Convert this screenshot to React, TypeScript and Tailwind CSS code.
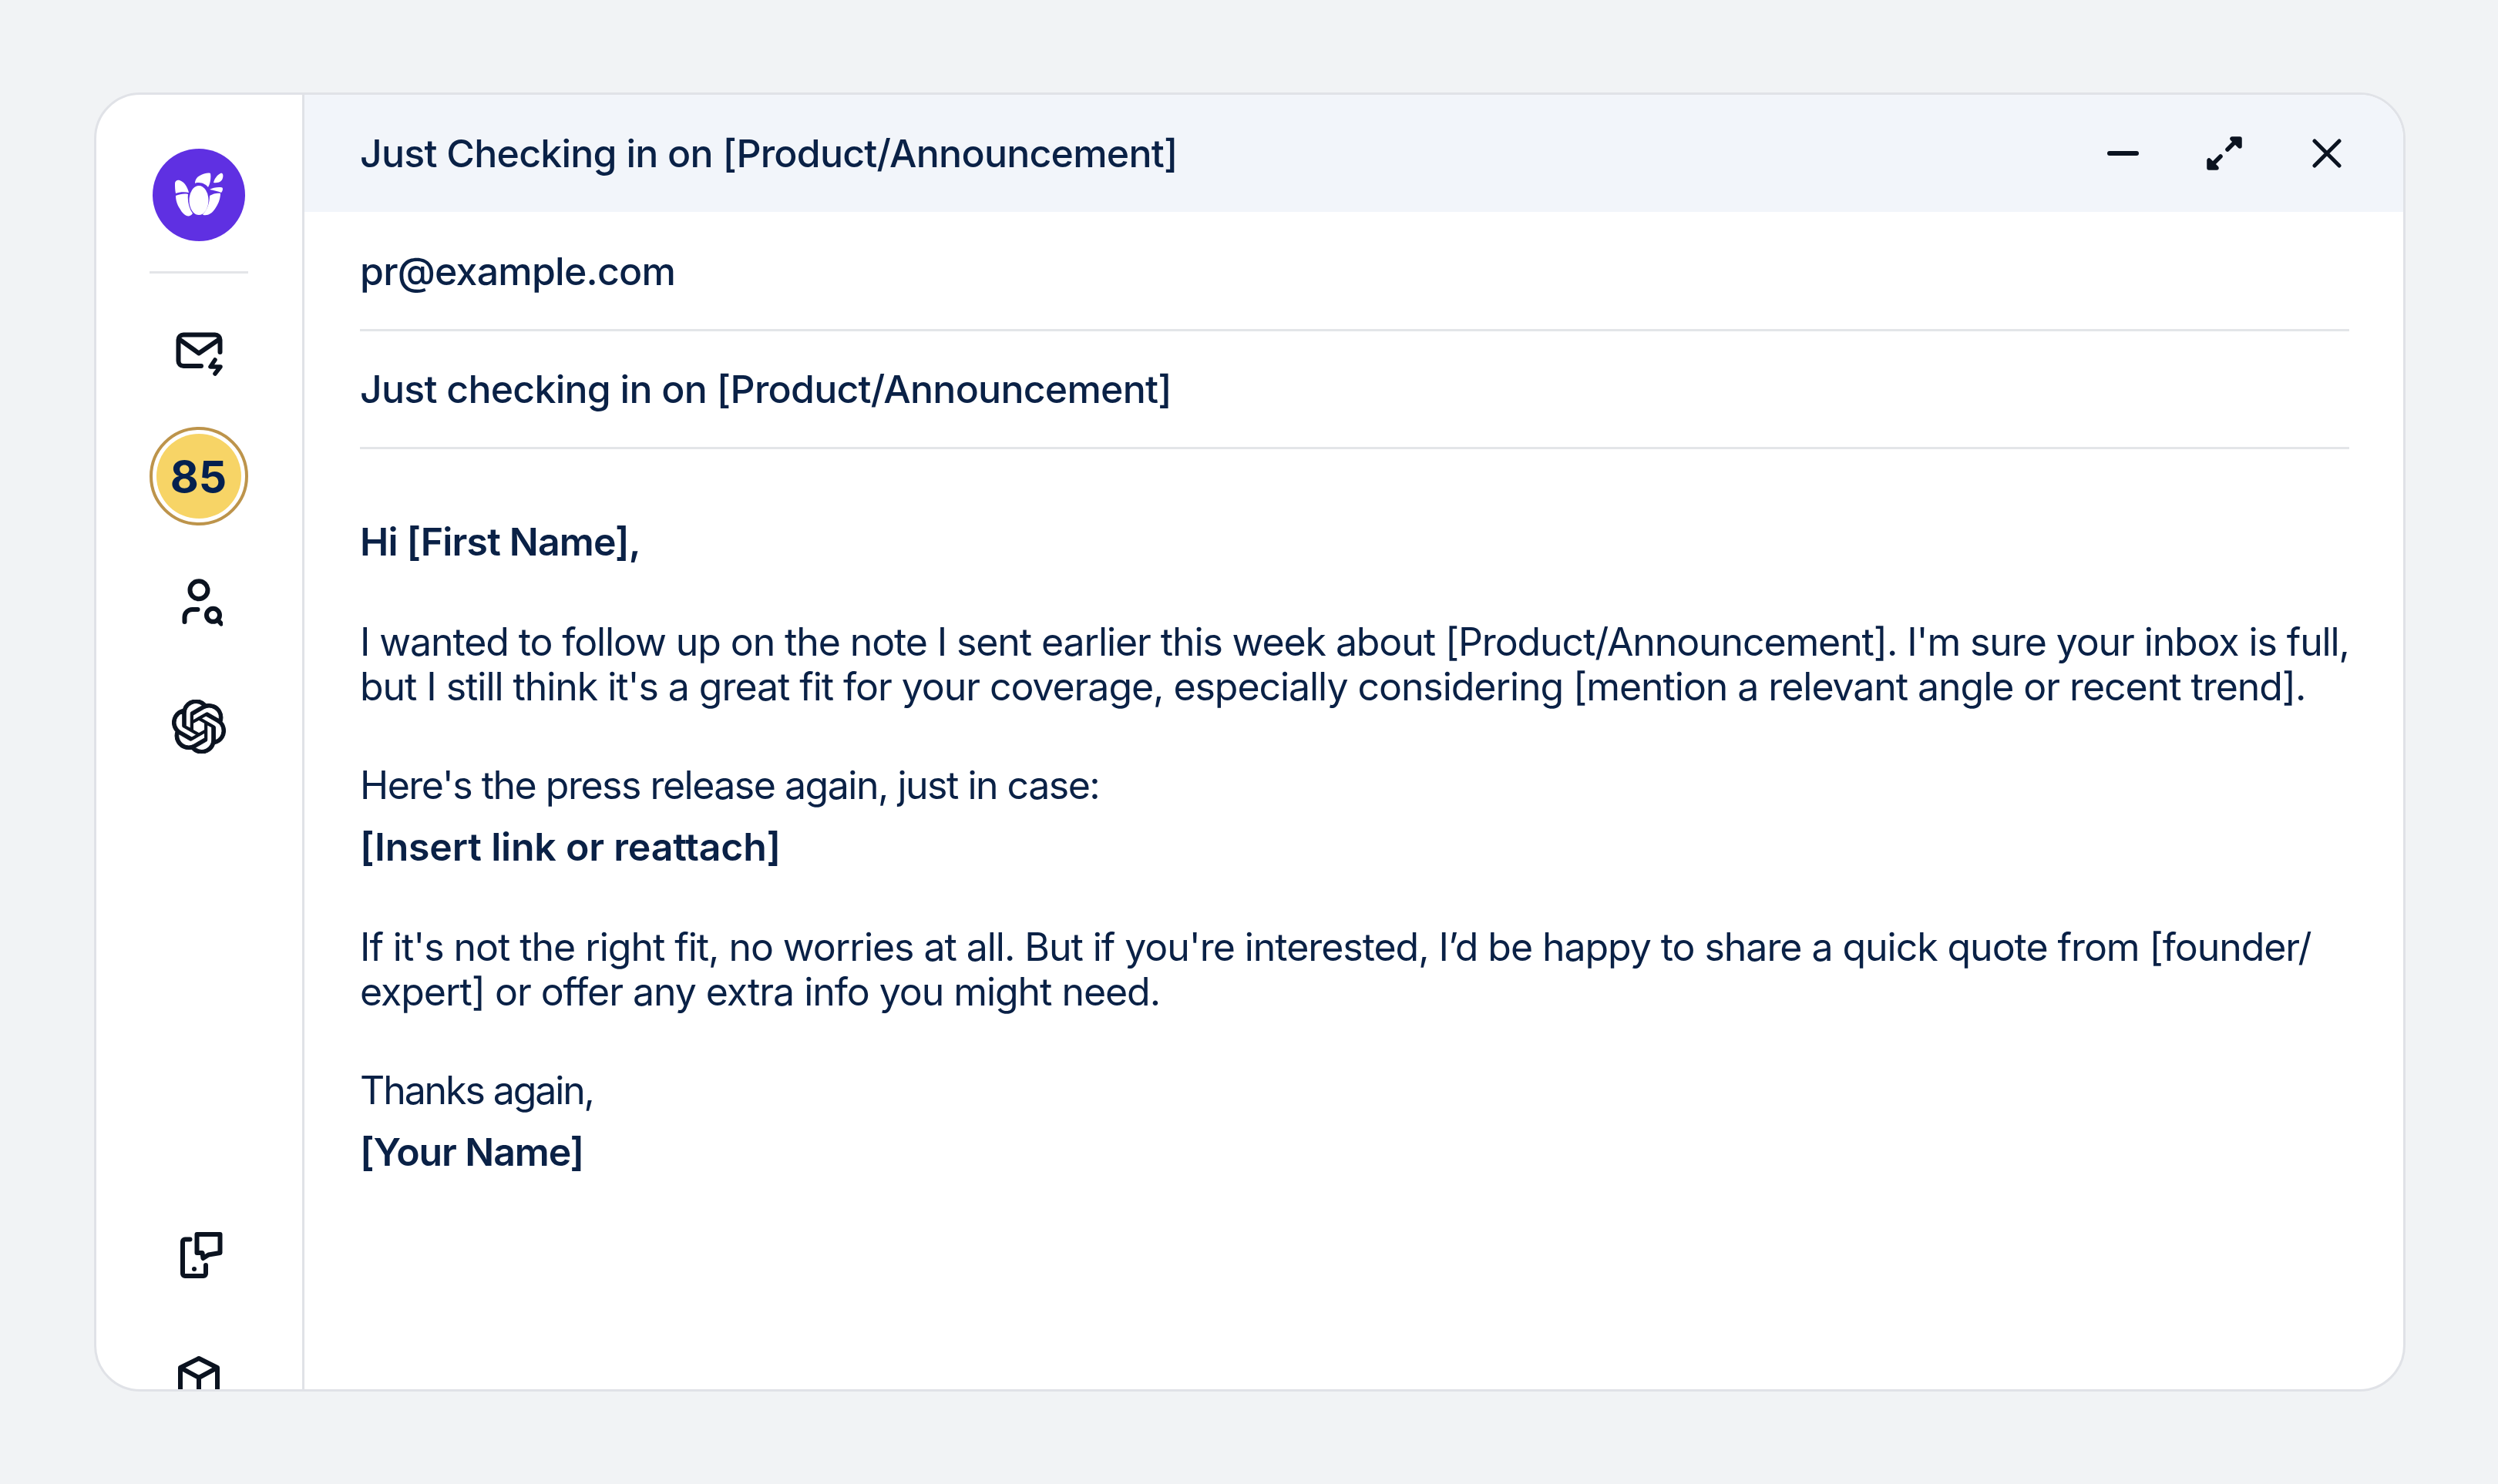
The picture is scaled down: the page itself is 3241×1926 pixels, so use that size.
import { FC, ReactNode } from "react";

const font = "font-['Inter',sans-serif]";

const IconMail = () => (
  <svg width="62" height="58" viewBox="0 0 62 58" fill="none" stroke="#0b1320" strokeWidth="6" strokeLinecap="round" strokeLinejoin="round" className="block">
    <path d="M33 44H10a6.5 6.5 0 0 1-6.5-6.5V10A6.5 6.5 0 0 1 10 3.5h41a6.5 6.5 0 0 1 6.5 6.5v16" />
    <path d="M7 11l23 16.5L54 11" />
    <path d="M51 36l-6 9h13l-7 9" strokeWidth="5.5" />
  </svg>
);

const IconUserSearch = () => (
  <svg width="62" height="62" viewBox="0 0 62 62" fill="none" stroke="#0b1320" strokeWidth="6" strokeLinecap="round" className="block">
    <circle cx="31" cy="14.7" r="11.5" />
    <path d="M12.5 56v-6a10 10 0 0 1 10-10h7" />
    <circle cx="49.5" cy="47.3" r="8.5" />
    <path d="M55.5 53.5l4.5 5" />
  </svg>
);

const IconOpenAI = () => (
  <svg width="70" height="70" viewBox="0 0 24 24" fill="#0b1320" stroke="#0b1320" strokeWidth="0.35" strokeLinejoin="round" className="block">
    <path d="M22.28 9.82a5.98 5.98 0 0 0-.52-4.91 6.05 6.05 0 0 0-6.51-2.9A6.07 6.07 0 0 0 4.98 4.18a5.98 5.98 0 0 0-4 2.9 6.05 6.05 0 0 0 .74 7.1 5.98 5.98 0 0 0 .51 4.91 6.05 6.05 0 0 0 6.52 2.9A5.98 5.98 0 0 0 13.26 24a6.06 6.06 0 0 0 5.77-4.21 5.99 5.99 0 0 0 4-2.9 6.06 6.06 0 0 0-.75-7.07zM13.26 22.43a4.48 4.48 0 0 1-2.88-1.04l.14-.08 4.78-2.76a.79.79 0 0 0 .39-.68v-6.74l2.02 1.17a.07.07 0 0 1 .04.05v5.58a4.5 4.5 0 0 1-4.49 4.5zM3.6 18.3a4.47 4.47 0 0 1-.53-3.01l.14.08 4.78 2.76a.77.77 0 0 0 .78 0l5.84-3.37v2.33a.08.08 0 0 1-.03.06L9.74 19.95a4.5 4.5 0 0 1-6.14-1.65zM2.34 7.9a4.49 4.49 0 0 1 2.37-1.97v5.68a.77.77 0 0 0 .39.68l5.81 3.35-2.02 1.17a.08.08 0 0 1-.07 0l-4.83-2.79A4.5 4.5 0 0 1 2.34 7.87zm16.6 3.86-5.83-3.39 2.02-1.16a.08.08 0 0 1 .07 0l4.83 2.79a4.49 4.49 0 0 1-.68 8.1v-5.68a.79.79 0 0 0-.41-.66zm2.01-3.02-.14-.09-4.77-2.78a.78.78 0 0 0-.79 0L9.41 9.23V6.9a.07.07 0 0 1 .03-.06l4.83-2.79a4.5 4.5 0 0 1 6.68 4.66zM8.31 12.86 6.29 11.7a.08.08 0 0 1-.04-.06V6.07a4.5 4.5 0 0 1 7.38-3.45l-.14.08L8.7 5.46a.8.8 0 0 0-.39.68zm1.1-2.37 2.6-1.5 2.61 1.5v3l-2.6 1.5-2.61-1.5z" />
  </svg>
);

const IconPhoneChat = () => (
  <svg width="56" height="60" viewBox="0 0 56 60" fill="none" stroke="#0b1320" strokeWidth="6" strokeLinecap="round" strokeLinejoin="round" className="block">
    <path d="M12.5 9.5H6a3 3 0 0 0-3 3V54a3 3 0 0 0 3 3h24a3 3 0 0 0 3-3V43" />
    <path d="M21.5 3h30v24l-15 2.5-7 4.5-1-7h-7z" />
    <circle cx="18" cy="48" r="3" fill="#0b1320" stroke="none" />
  </svg>
);

const IconBox = () => (
  <svg width="54" height="60" viewBox="0 0 54 60" fill="none" stroke="#0b1320" strokeWidth="6" strokeLinejoin="round" className="block">
    <path d="M27 4l24 12v32H3V16z" />
    <path d="M3 16l24 13 24-13M27 29v24" />
  </svg>
);

const IconExpand = () => (
  <svg width="48" height="46" viewBox="0 0 48 46" fill="none" stroke="#0b1320" strokeWidth="5.5" strokeLinecap="round" strokeLinejoin="round" className="block">
    <path d="M37 9l-9 9" />
    <path d="M34 4h10v10z" fill="#0b1320" />
    <path d="M19 27l-9 9" />
    <path d="M4 32v10h10z" fill="#0b1320" />
  </svg>
);

const IconClose = () => (
  <svg width="38" height="38" viewBox="0 0 38 38" fill="none" stroke="#0b1320" strokeWidth="5" strokeLinecap="round" className="block">
    <path d="M3 3l32 32M35 3L3 35" />
  </svg>
);

const Logo = () => (
  <div className="flex h-[120px] w-[120px] items-center justify-center rounded-full bg-[#5f30e2]">
    <svg width="64" height="58" viewBox="0 0 64 58" fill="#ffffff">
      <ellipse cx="32" cy="36" rx="12.5" ry="19" />
      <path d="M1 14c0-3 3-5 6-4 6 2 10 8 12 16-5-1-12-1-17 1-1-4-1-9-1-13z" />
      <path d="M2 30c5-2 11-3 16-2-1 9 1 18 6 25-2 3-5 4-8 3-5-2-8-8-11-13-2-4-3-9-3-13z" />
      <path d="M27 14c0-5 3-9 8-11 4-2 9-3 12-2 1 5 0 13-3 18-2-3-7-6-12-6-2 0-3 0-5 1z" />
      <path d="M51 13c1-5 5-10 9-12 3-1 4 2 3 6-1 4-5 7-12 6z" />
      <path d="M46 22c3-2 8-3 12-3 3 0 5 0 5 2 0 2-1 4-2 5-4-2-10-3-15-4z" />
      <path d="M46 30c5-3 10-4 14-3 0 6-2 13-7 20-4 6-9 9-15 8-1 0-1-1 0-2 5-5 8-14 8-23z" />
    </svg>
  </div>
);

const ScoreBadge = () => (
  <div className="flex h-[128px] w-[128px] items-center justify-center rounded-full border-[4px] border-[#bd944b] bg-white">
    <div className="flex h-[110px] w-[110px] items-center justify-center rounded-full bg-[#f7d466] text-[57px] font-bold leading-none text-[#04204f]">
      85
    </div>
  </div>
);

const Para: FC<{ children: ReactNode; className: string }> = ({ children, className }) => (
  <p className={`whitespace-nowrap text-[50px] leading-[58px] ${className}`}>{children}</p>
);

export default function App() {
  return (
    <div className="flex h-[1926px] w-[3241px] items-start bg-[#f1f3f5] pl-[122px] pt-[120px]">
      <div className={`flex h-[1686px] w-[2999px] overflow-hidden rounded-[60px] border-[3px] border-[#e0e2e7] bg-white text-[#0a2146] ${font}`}>
        <aside className="flex w-[270px] shrink-0 flex-col items-center overflow-hidden border-r-[3px] border-[#e0e2e7] pr-[2px] pt-[70px]">
          <Logo />
          <div className="mt-[39px] h-[3px] w-[128px] bg-[#e3e5e8]" />
          <div className="ml-[2px] mt-[76px]"><IconMail /></div>
          <div className="mt-[65px]"><ScoreBadge /></div>
          <div className="mt-[69px]"><IconUserSearch /></div>
          <div className="ml-[1px] mt-[95px]"><IconOpenAI /></div>
          <div className="ml-[8px] mt-auto"><IconPhoneChat /></div>
          <div className="-mb-[16px] mt-[100px]"><IconBox /></div>
        </aside>
        <main className="flex min-w-0 flex-1 flex-col">
          <header className="flex h-[152px] shrink-0 items-center justify-between bg-[#f2f5fa] pl-[72px] pr-[80px]">
            <span className="text-[50px] font-medium leading-none tracking-[-0.76px]">Just Checking in on [Product/Announcement]</span>
            <div className="flex items-center">
              <div className="h-[6px] w-[41px] rounded-full bg-[#0b1320]" />
              <div className="ml-[87px]"><IconExpand /></div>
              <div className="ml-[90px]"><IconClose /></div>
            </div>
          </header>
          <div className="flex flex-1 flex-col pl-[72px] pr-[70px]">
            <div className="flex h-[155px] shrink-0 items-center border-b-[3px] border-[#e3e5e8] pt-[2px] text-[50px] font-medium tracking-[-0.76px]">pr@example.com</div>
            <div className="flex h-[153px] shrink-0 items-center border-b-[3px] border-[#e3e5e8] text-[50px] font-medium tracking-[-0.76px]">Just checking in on [Product/Announcement]</div>
            <div className="pt-[91px]">
              <Para className="font-semibold tracking-[-0.85px]">Hi [First Name],</Para>
              <Para className="mt-[72px] tracking-[-1.06px]">
                <span className="tracking-[-1.11px]">I wanted to follow up on the note I sent earlier this week about [Product/Announcement]. I'm sure your inbox is full,</span><br />
                but I still think it's a great fit for your coverage, especially considering [mention a relevant angle or recent trend].
              </Para>
              <Para className="mt-[70px] tracking-[-1.5px]">Here's the press release again, just in case:</Para>
              <Para className="mt-[22px] font-semibold tracking-[-0.2px]">[Insert link or reattach]</Para>
              <Para className="mt-[72px] tracking-[-1.05px]">
                If it's not the right fit, no worries at all. But if you're interested, I’d be happy to share a quick quote from [founder/<br />
                expert] or offer any extra info you might need.
              </Para>
              <Para className="mt-[70px] tracking-[-2.1px]">Thanks again,</Para>
              <Para className="mt-[22px] font-semibold tracking-[-1.1px]">[Your Name]</Para>
            </div>
          </div>
        </main>
      </div>
    </div>
  );
}
